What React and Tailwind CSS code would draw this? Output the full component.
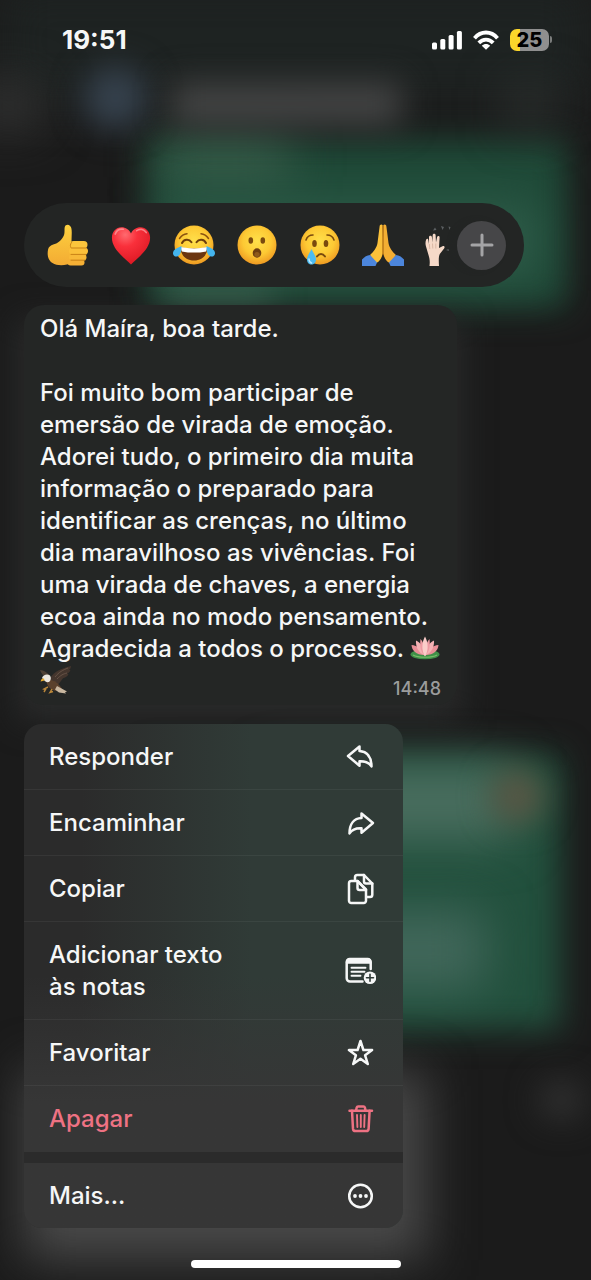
import React from 'react';

const ThumbsUp = () => (
  <svg viewBox="0 0 42 44" className="w-[42px] h-11" aria-hidden="true">
    <defs>
      <linearGradient id="thumb" x1="0" y1="0" x2="0" y2="1">
        <stop offset="0" stopColor="#fdd13f" />
        <stop offset="1" stopColor="#f3ab33" />
      </linearGradient>
    </defs>
    <path d="M18.500 2.500c2.200-1.800 5-.6 5.800 2.500.9 3.800.2 8.500.2 13.500l3 7-3 14c-4 3-14 4-19 .5C.500 37 .2 31 1 27c.7-3.800 3.300-5 7.500-6.200C12 19.500 16.500 15 17.300 11c.6-3-.4-6.700 1.200-8.500z" fill="url(#thumb)" />
    <rect x="23" y="18" width="17.500" height="7.500" rx="3.700" fill="#fcc53c" />
    <rect x="22" y="24.500" width="19" height="7.200" rx="3.600" fill="#fbc03a" />
    <rect x="22" y="31" width="17.500" height="6.500" rx="3.200" fill="#f8b938" />
    <rect x="20.500" y="36.500" width="17" height="6" rx="3" fill="#f5b035" />
    <path d="M25 25h14M24 31.400h15M24 37.200h14M24.500 19.500c-1.500 2-1.500 3.500-.3 5.500" stroke="#c98216" strokeWidth="1" fill="none" strokeLinecap="round" />
  </svg>
);

const HeartEmoji = () => (
  <svg viewBox="-1 -1 44 46" className="w-[42px] h-11" aria-hidden="true">
    <defs>
      <radialGradient id="heart" cx=".35" cy=".2" r=".9">
        <stop offset="0" stopColor="#ff6a6f" />
        <stop offset=".35" stopColor="#f9303b" />
        <stop offset="1" stopColor="#d8141f" />
      </radialGradient>
    </defs>
    <path d="M21 42.500C15 36 1 27 1 14.500 1 8 5.500 3.500 11 3.500c4.500 0 8 2.500 10 6.500 2-4 5.500-6.500 10-6.500 5.500 0 10 4.500 10 11C41 27 27 36 21 42.500z" fill="url(#heart)" />
    <path d="M4.500 10.500c1.500-4 5-5.500 8.500-5M27 7c3-2.300 7.500-1.800 10 2" stroke="#ffb5b5" strokeWidth="1.800" fill="none" strokeLinecap="round" opacity=".6" />
  </svg>
);

const FaceBase = ({ id }) => (
  <>
    <defs>
      <radialGradient id={id} cx=".5" cy=".4" r=".6">
        <stop offset="0" stopColor="#ffe04b" />
        <stop offset=".6" stopColor="#fdc934" />
        <stop offset="1" stopColor="#ee9a22" />
      </radialGradient>
    </defs>
    <circle cx="21" cy="22" r="19.500" fill={`url(#${id})`} />
  </>
);

const LaughFace = () => (
  <svg viewBox="0 0 42 44" className="w-[42px] h-11" aria-hidden="true">
    <FaceBase id="laugh" />
    <path d="M6.500 15.500c2-3 4.500-4.500 7.500-4.800M35.500 15.500c-2-3-4.500-4.500-7.500-4.800" stroke="#8a5210" strokeWidth="1.500" fill="none" strokeLinecap="round" />
    <path d="M9 20c2-4 7-4.500 9.500-.8M33 20c-2-4-7-4.500-9.500-.8" stroke="#6d3e0c" strokeWidth="2" fill="none" strokeLinecap="round" />
    <path d="M7.500 24c8 2 19 2 27 0 0 8-5 13.500-13.500 13.500S7.500 32 7.500 24z" fill="#6b3510" />
    <path d="M8 24.100c8 1.900 18 1.900 26 0 0 2-.3 3-.8 4.300-8 1.600-16.400 1.600-24.400 0C8.200 27 8 26 8 24.100z" fill="#fff" />
    <path d="M8.500 23c0 4-.5 9.500-4.500 10.500-3.500.7-5-3-3.300-5.800C2.300 25.300 6 24.500 8.500 23z" fill="#44b5ee" />
    <path d="M33.500 23c0 4 .5 9.500 4.500 10.500 3.500.7 5-3 3.300-5.800C39.700 25.300 36 24.500 33.500 23z" fill="#44b5ee" />
  </svg>
);

const SurprisedFace = () => (
  <svg viewBox="0 0 42 44" className="w-[42px] h-11" aria-hidden="true">
    <FaceBase id="wow" />
    <ellipse cx="14.800" cy="17.500" rx="2.300" ry="3.200" fill="#7a4a0e" />
    <ellipse cx="26.800" cy="17.500" rx="2.300" ry="3.200" fill="#7a4a0e" />
    <ellipse cx="21" cy="30" rx="4.300" ry="4.700" fill="#6d3d10" />
    <ellipse cx="21" cy="31.500" rx="2.700" ry="2.500" fill="#8f5a1b" />
  </svg>
);

const CryFace = () => (
  <svg viewBox="0 0 42 44" className="w-[42px] h-11" aria-hidden="true">
    <FaceBase id="cry" />
    <path d="M7 17c1-3 3.500-5 7-5M35 17c-1-3-3.500-5-7-5" stroke="#7a4a0e" strokeWidth="1.600" fill="none" strokeLinecap="round" />
    <ellipse cx="15.500" cy="20.500" rx="2.300" ry="3.500" fill="#7a4a0e" />
    <ellipse cx="27" cy="20.500" rx="2.300" ry="3.500" fill="#7a4a0e" />
    <path d="M18 33.500c2.300-3.300 5.700-3.300 8 0" stroke="#7a4a0e" strokeWidth="1.900" fill="none" strokeLinecap="round" />
    <path d="M12.500 26c1.500 3.800 4.500 7 4.500 10.500 0 3-2 5-4.500 5s-4.500-2-4.500-5c0-3.500 3-6.700 4.500-10.500z" fill="#4dbcf0" />
    <path d="M10 36c0 2 1 3.500 2.500 4" stroke="#bce8ff" strokeWidth="1.500" fill="none" strokeLinecap="round" />
  </svg>
);

const PrayHands = () => (
  <svg viewBox="0 0 42 44" className="w-[42px] h-11" aria-hidden="true">
    <path d="M20.800 2.500c-1-1.600-3-1.200-3.200 1L15.500 20c-.5 4-4 9-7.500 12l5.500 8.500c4.500-1.500 7.300-4.500 7.800-8z" fill="#fbc13a" />
    <path d="M21.200 2.500c1-1.600 3-1.200 3.200 1L26.500 20c.5 4 4 9 7.500 12l-5.500 8.500c-4.500-1.500-7.300-4.500-7.800-8z" fill="#f3ae33" />
    <path d="M21 2.500V31c.2 3 1.500 6 4 8.500M21 31c-.2 3-1.500 6-4 8.500" stroke="#a9680f" strokeWidth="1.200" fill="none" />
    <path d="M21 30.500c1 4 3 7.500 6 9.500l-1 3H16l-1-3c3-2 5-5.500 6-9.500z" fill="#232524" />
    <path d="M0 36.500c2.500-2.800 5-4.300 8-4.500l7 7.500-1.500 3.500H0z" fill="#4c86dc" />
    <path d="M42 36.500c-2.500-2.800-5-4.300-8-4.500l-7 7.500 1.500 3.500H42z" fill="#4c86dc" />
  </svg>
);

const RaisedHands = () => (
  <svg viewBox="0 0 42 44" className="w-[42px] h-11" aria-hidden="true">
    <path d="M4.500 43c.5-4 .3-7-1-11L1 23.500c-.8-2.500-.6-5 .2-7 .8-1.300 2-.8 2.100.6l.7 3.900V14c.2-1.700 2.600-1.700 2.900 0l.4 5.500.4-7.500c.2-1.700 2.700-1.700 2.900 0l.4 7.500 1.100-5.500c.4-1.600 2.600-1.300 2.500.4L14 25l3.500-1.800c1.600-.7 2.800.9 1.600 2.200l-4.300 5.600c-1.300 2.500-1.100 7-.8 12z" fill="#f6d9c8" />
    <path d="M4.300 21l.5 5M7.500 20.500l.3 5M10.800 20.500v5" stroke="#cfa995" strokeWidth=".7" />
    <path d="M8 7.500l2-3 1.500 2.500zM16 3l3 1-1.500 3zM23.500 3.500l2 .5-1 3zM21 27l2.500-1 .5 2z" fill="#5c6062" />
  </svg>
);

const Lotus = () => (
  <svg viewBox="0 0 30 24" className="inline-block w-[30px] h-6 align-[-3px]" aria-label="lótus" role="img">
    <ellipse cx="15" cy="18.500" rx="14.500" ry="4.800" fill="#3f8f48" />
    <path d="M3 19c5 3 19 3 24 0" stroke="#78bd68" strokeWidth="1.200" fill="none" />
    <path d="M14.500 19C6 19 2 14.500 1.500 9c6 .5 10 4 13 10zM15.500 19c8.500 0 12.500-4.500 13-10-6 .5-10 4-13 10z" fill="#e98f97" />
    <path d="M15 19.500C8 17 5.500 10 6 4.500 11 7 14 12 15 19.500zM15 19.500c7-2.500 9.500-9.500 9-15-5 2.500-8 7.500-9 15z" fill="#f4b1b4" />
    <path d="M15 20c-4-4-5.500-8.500-4.500-17 3 3 4.500 9 4.500 17zM15 20c4-4 5.500-8.500 4.500-17-3 3-4.500 9-4.500 17z" fill="#ee9aa3" />
    <path d="M15 20.500c-3.500-6-3.500-13.500 0-20 3.500 6.500 3.500 14 0 20z" fill="#fbcdca" />
  </svg>
);

const Eagle = () => (
  <svg viewBox="0 0 32 30" className="inline-block w-8 h-[30px] align-[-6px]" aria-label="águia" role="img">
    <path d="M9 16C11 9 18 4 31 1c0 2-1 3-2 4 1 0 1 0 1.500.3-1 2-2 2.700-3.500 3.500.8.2 1 .3 1.500.6-1.500 2.200-3.500 3-5.500 3.800l-6 8z" fill="#44352d" />
    <path d="M10 11C7 7 4 5.500 0 5c1.500 3.500 3 6 7 8z" fill="#4e4034" />
    <path d="M6 15c5-1 10 1 14 6l3 4-7 1c-5-1-9-4-10-11z" fill="#5b412d" />
    <path d="M17 21l10 5.500-2 .7 1 1.300-7-1-4-3z" fill="#c9b7a0" />
    <path d="M2 13c1-3 5-4.500 8-2.500 1.500 2 1 5-1 6.500-2 .5-4-.2-5-2z" fill="#ece7df" />
    <path d="M4 13.500c-2-.3-3 .5-3.400 3l3.900-1z" fill="#e3a82d" />
    <path d="M8 22l-4 2 1.500.5L4 27M12 24l-2 3.500 3-1" stroke="#b9863a" strokeWidth="1.500" fill="none" />
    <path d="M15 12c4-5 8-7 13-9M17 14c4-4 6-5 10-6" stroke="#6f5b4c" strokeWidth=".8" fill="none" />
  </svg>
);

const MenuIcon = ({ children }) => (
  <svg
    viewBox="0 0 32 32"
    className="w-8 h-8 shrink-0"
    fill="none"
    stroke="currentColor"
    strokeWidth="2.500"
    strokeLinecap="round"
    strokeLinejoin="round"
    aria-hidden="true"
  >
    {children}
  </svg>
);

const arrowPath = 'M15.500 5.500 4 15l11.500 9.700v-4.500c5.500-.3 9.300 1 12 5.200 0-9.400-4.500-15-12-15.400z';

const icons = {
  reply: (
    <MenuIcon>
      <path d={arrowPath} />
    </MenuIcon>
  ),
  forward: (
    <MenuIcon>
      <path d={arrowPath} transform="translate(33 1) scale(-1 1)" />
    </MenuIcon>
  ),
  copy: (
    <MenuIcon>
      <path d="M13.500 8H7.300A2.300 2.300 0 0 0 5 10.300v17.400A2.300 2.300 0 0 0 7.300 30h12.400a2.300 2.300 0 0 0 2.300-2.300V17z" />
      <path d="M13.500 8v7a2 2 0 0 0 2 2H22" />
      <path d="M11 7V4.300A2.300 2.300 0 0 1 13.300 2H20l8.300 8.500v11.200A2.300 2.300 0 0 1 26 24h-3" />
      <path d="M20 2v6.500a2 2 0 0 0 2 2h6.300M14 8.500l8 8" />
    </MenuIcon>
  ),
  note: (
    <MenuIcon>
      <path d="M18.500 26.500H6A3.300 3.300 0 0 1 2.700 23.200V7A3 3 0 0 1 5.700 4h18a3 3 0 0 1 3 3v7" />
      <path d="M2.700 8V7a3 3 0 0 1 3-3h18a3 3 0 0 1 3 3v1z" fill="currentColor" strokeWidth="1.600" />
      <path d="M7.500 12.700h14M7.500 16.700h13M7.500 20.700h9" strokeWidth="1.900" />
      <circle cx="26" cy="22.700" r="6.300" fill="currentColor" stroke="none" />
      <path d="M26 19.200v7M22.500 22.700h7" stroke="#2f3a36" strokeWidth="1.600" />
    </MenuIcon>
  ),
  star: (
    <MenuIcon>
      <path d="m16.500 4 2.900 9h8.700l-7 5.300 2.700 8.700-7.300-5.200L9.200 27l2.700-8.700-7-5.300h8.700z" />
    </MenuIcon>
  ),
  trash: (
    <MenuIcon>
      <path d="M5.500 7.700h22.500M12 7.700l.7-3.200a1.500 1.500 0 0 1 1.500-1.100h5.200a1.500 1.500 0 0 1 1.500 1.100l.7 3.200" />
      <path d="M8 7.700l1 18.200a2.400 2.400 0 0 0 2.400 2.200h10.800a2.400 2.400 0 0 0 2.400-2.200l1-18.200" />
      <path d="M13 12l.4 12M16.800 12v12M20.600 12l-.4 12" strokeWidth="1.900" />
    </MenuIcon>
  ),
  more: (
    <MenuIcon>
      <circle cx="16.500" cy="16" r="11.300" />
      <g fill="currentColor" stroke="none">
        <circle cx="11" cy="16" r="1.900" />
        <circle cx="16.500" cy="16" r="1.900" />
        <circle cx="22" cy="16" r="1.900" />
      </g>
    </MenuIcon>
  )
};

const reactions = [
  { label: 'Curtir', Emoji: ThumbsUp },
  { label: 'Amei', Emoji: HeartEmoji },
  { label: 'Risada', Emoji: LaughFace },
  { label: 'Surpresa', Emoji: SurprisedFace },
  { label: 'Triste', Emoji: CryFace },
  { label: 'Gratidão', Emoji: PrayHands },
  { label: 'Mãos para o alto', Emoji: RaisedHands }
];

const menuItems = [
  { label: 'Responder', icon: 'reply' },
  { label: 'Encaminhar', icon: 'forward' },
  { label: 'Copiar', icon: 'copy' },
  { label: 'Adicionar texto às notas', icon: 'note' },
  { label: 'Favoritar', icon: 'star' },
  { label: 'Apagar', icon: 'trash', danger: true }
];

// Blurred conversation behind the menu
const Backdrop = () => (
  <div className="absolute inset-0 overflow-hidden" aria-hidden="true">
    <div className="absolute inset-x-0 -top-5 h-[120px] bg-[#1e2322] blur-xl" />
    <div className="absolute left-[25%] right-[4%] top-[140px] h-[168px] bg-[#1f4a38] blur-lg" />
    <div className="absolute left-[27%] w-[22%] top-[140px] h-10 bg-[#3b5f4c] blur-xl" />
    <div className="absolute left-[27%] right-[9%] top-[205px] h-[70px] bg-[#2f5d4a] blur-xl" />
    <div className="absolute left-[28%] w-[18%] top-[284px] h-5 bg-[#3f6553] blur-lg" />
    <div className="absolute left-[-4%] w-[11%] top-[82px] h-12 bg-[#333333] blur-xl" />
    <div className="absolute left-[14%] w-[11%] top-[66px] h-16 rounded-full bg-[#36424e] blur-lg" />
    <div className="absolute left-[29%] right-[32%] top-[82px] h-11 bg-[#434444] blur-lg" />
    <div className="absolute left-[86%] w-[7%] top-[85px] h-10 bg-[#303533] blur-xl" />
    <div className="absolute left-[3%] right-[22%] top-[320px] h-[400px] bg-[#2a2b2b] blur-lg" />
    <div className="absolute left-[25%] right-[5%] top-[755px] h-[275px] bg-[#22503d] blur-lg" />
    <div className="absolute left-[45%] right-[13%] top-[765px] h-[75px] bg-[#4a6e5f] blur-xl" />
    <div className="absolute left-[45%] right-[18%] top-[910px] h-[80px] bg-[#41675a] blur-xl" />
    <div className="absolute left-[83%] w-[9%] top-[770px] h-[52px] rounded-full bg-[#5a5644] blur-lg" />
    <div className="absolute left-[4%] right-[28%] top-[1070px] h-[190px] bg-[#494949] blur-xl" />
    <div className="absolute left-[91%] w-[8%] top-[1080px] h-10 rounded-full bg-[#303030] blur-lg" />
  </div>
);

const StatusBar = () => (
  <header className="flex items-center justify-between pl-[62px] pr-[39px] h-[79px]">
    <time className="text-[26px] font-bold">19:51</time>
    <div className="flex items-center gap-[11px]">
      <svg viewBox="0 0 30 20" className="w-[30px] h-5" fill="#fff" aria-label="Sinal" role="img">
        <rect x="0" y="12.500" width="5" height="7" rx="1.500" />
        <rect x="8.300" y="9" width="5" height="10.500" rx="1.500" />
        <rect x="16.600" y="5" width="5" height="14.500" rx="1.500" />
        <rect x="24.900" y="1" width="5" height="18.500" rx="1.500" />
      </svg>
      <svg viewBox="0 0 26 20" className="w-[26px] h-5" fill="none" stroke="#fff" strokeWidth="3.800" aria-label="Wi-Fi" role="img">
        <path d="M1.500 8.200C8 .6 18 .6 24.500 8.200" />
        <path d="M5.800 12.900c4.200-4.500 10.200-4.500 14.400 0" />
        <path d="M13 19.800l-4.200-4.100c2.400-2.200 6-2.200 8.400 0z" fill="#fff" stroke="none" />
      </svg>
      <div className="flex items-center gap-px">
        <div className="flex items-center justify-center w-[39px] h-[22px] rounded-[7px] bg-linear-to-r from-[#fbd62b] from-25% to-[#8f8f8f] to-25% text-black text-xl leading-none font-extrabold">
          25
        </div>
        <div className="w-[2px] h-[7px] rounded-r-full bg-[#7b7d7c]" />
      </div>
    </div>
  </header>
);

const ReactionBar = () => (
  <div className="flex items-center w-[500px] max-w-full h-[84px] pl-3 pr-[18px] rounded-full bg-[#232524]">
    <div className="flex flex-1 min-w-0 overflow-hidden">
      {reactions.map(({ label, Emoji }) => (
        <button key={label} aria-label={label} className="flex justify-center shrink-0 w-[63px]">
          <Emoji />
        </button>
      ))}
    </div>
    <button aria-label="Mais reações" className="relative flex items-center justify-center shrink-0 w-[49px] h-[49px] rounded-full bg-[#464648] shadow-[-5px_0_5px_#232524]">
      <svg viewBox="0 0 24 24" className="w-6 h-6" stroke="#a4a4a6" strokeWidth="3" strokeLinecap="round" aria-hidden="true">
        <path d="M12 2v20M2 12h20" />
      </svg>
    </button>
  </div>
);

const Message = () => (
  <article className="relative w-[433px] max-w-full mt-[18px] px-4 py-2 rounded-[20px] bg-[#242625] text-2xl leading-8 font-medium">
    <p>Olá Maíra, boa tarde.</p>
    <p className="mt-8">
      Foi muito bom participar de emersão de virada de emoção. Adorei tudo, o primeiro dia muita
      informação o preparado para identificar as crenças, no último dia maravilhoso as vivências. Foi
      uma virada de chaves, a energia ecoa ainda no modo pensamento. Agradecida a todos o
      processo. <Lotus /> <Eagle />
    </p>
    <time className="absolute right-4 bottom-1 text-lg leading-6 text-[#9b9c9c]">14:48</time>
  </article>
);

const MenuRow = ({ item }) => (
  <li className="border-b border-white/5 last:border-transparent">
    <button
      className={`flex items-center justify-between w-full pt-[17px] pb-4 pl-[25px] pr-[27px] text-left ${
        item.danger ? 'text-[#ee7283]' : 'text-[#f6f7f7]'
      }`}
    >
      <span className="w-[190px]">{item.label}</span>
      {icons[item.icon]}
    </button>
  </li>
);

const ContextMenu = () => (
  <nav className="w-[379px] max-w-full mt-[19px] rounded-[18px] overflow-hidden text-2xl leading-8 font-medium bg-linear-to-r from-[#2b2b2b] from-15% to-[#303b37] to-60%">
    <div className="bg-linear-to-b from-transparent from-50% to-[#363636] to-75%">
      <ul>
        {menuItems.map((item) => (
          <MenuRow key={item.icon} item={item} />
        ))}
      </ul>
      <div className="h-[11px] bg-[#2b2b2b]" />
      <button className="flex items-center justify-between w-full pt-[17px] pb-4 pl-[25px] pr-[27px] text-left text-[#f6f7f7]">
        <span>Mais...</span>
        {icons.more}
      </button>
    </div>
  </nav>
);

const App = () => {
  return (
    <div className="relative min-h-screen overflow-hidden bg-[#1b1b1b] text-[#f6f7f7] font-['Inter',sans-serif]">
      <Backdrop />
      <div className="relative">
        <StatusBar />
        <main className="pt-[124px] px-6">
          <ReactionBar />
          <Message />
          <ContextMenu />
        </main>
        <div className="w-[210px] h-2 mx-auto mt-8 mb-3 rounded-full bg-white" />
      </div>
    </div>
  );
};

export default App;
